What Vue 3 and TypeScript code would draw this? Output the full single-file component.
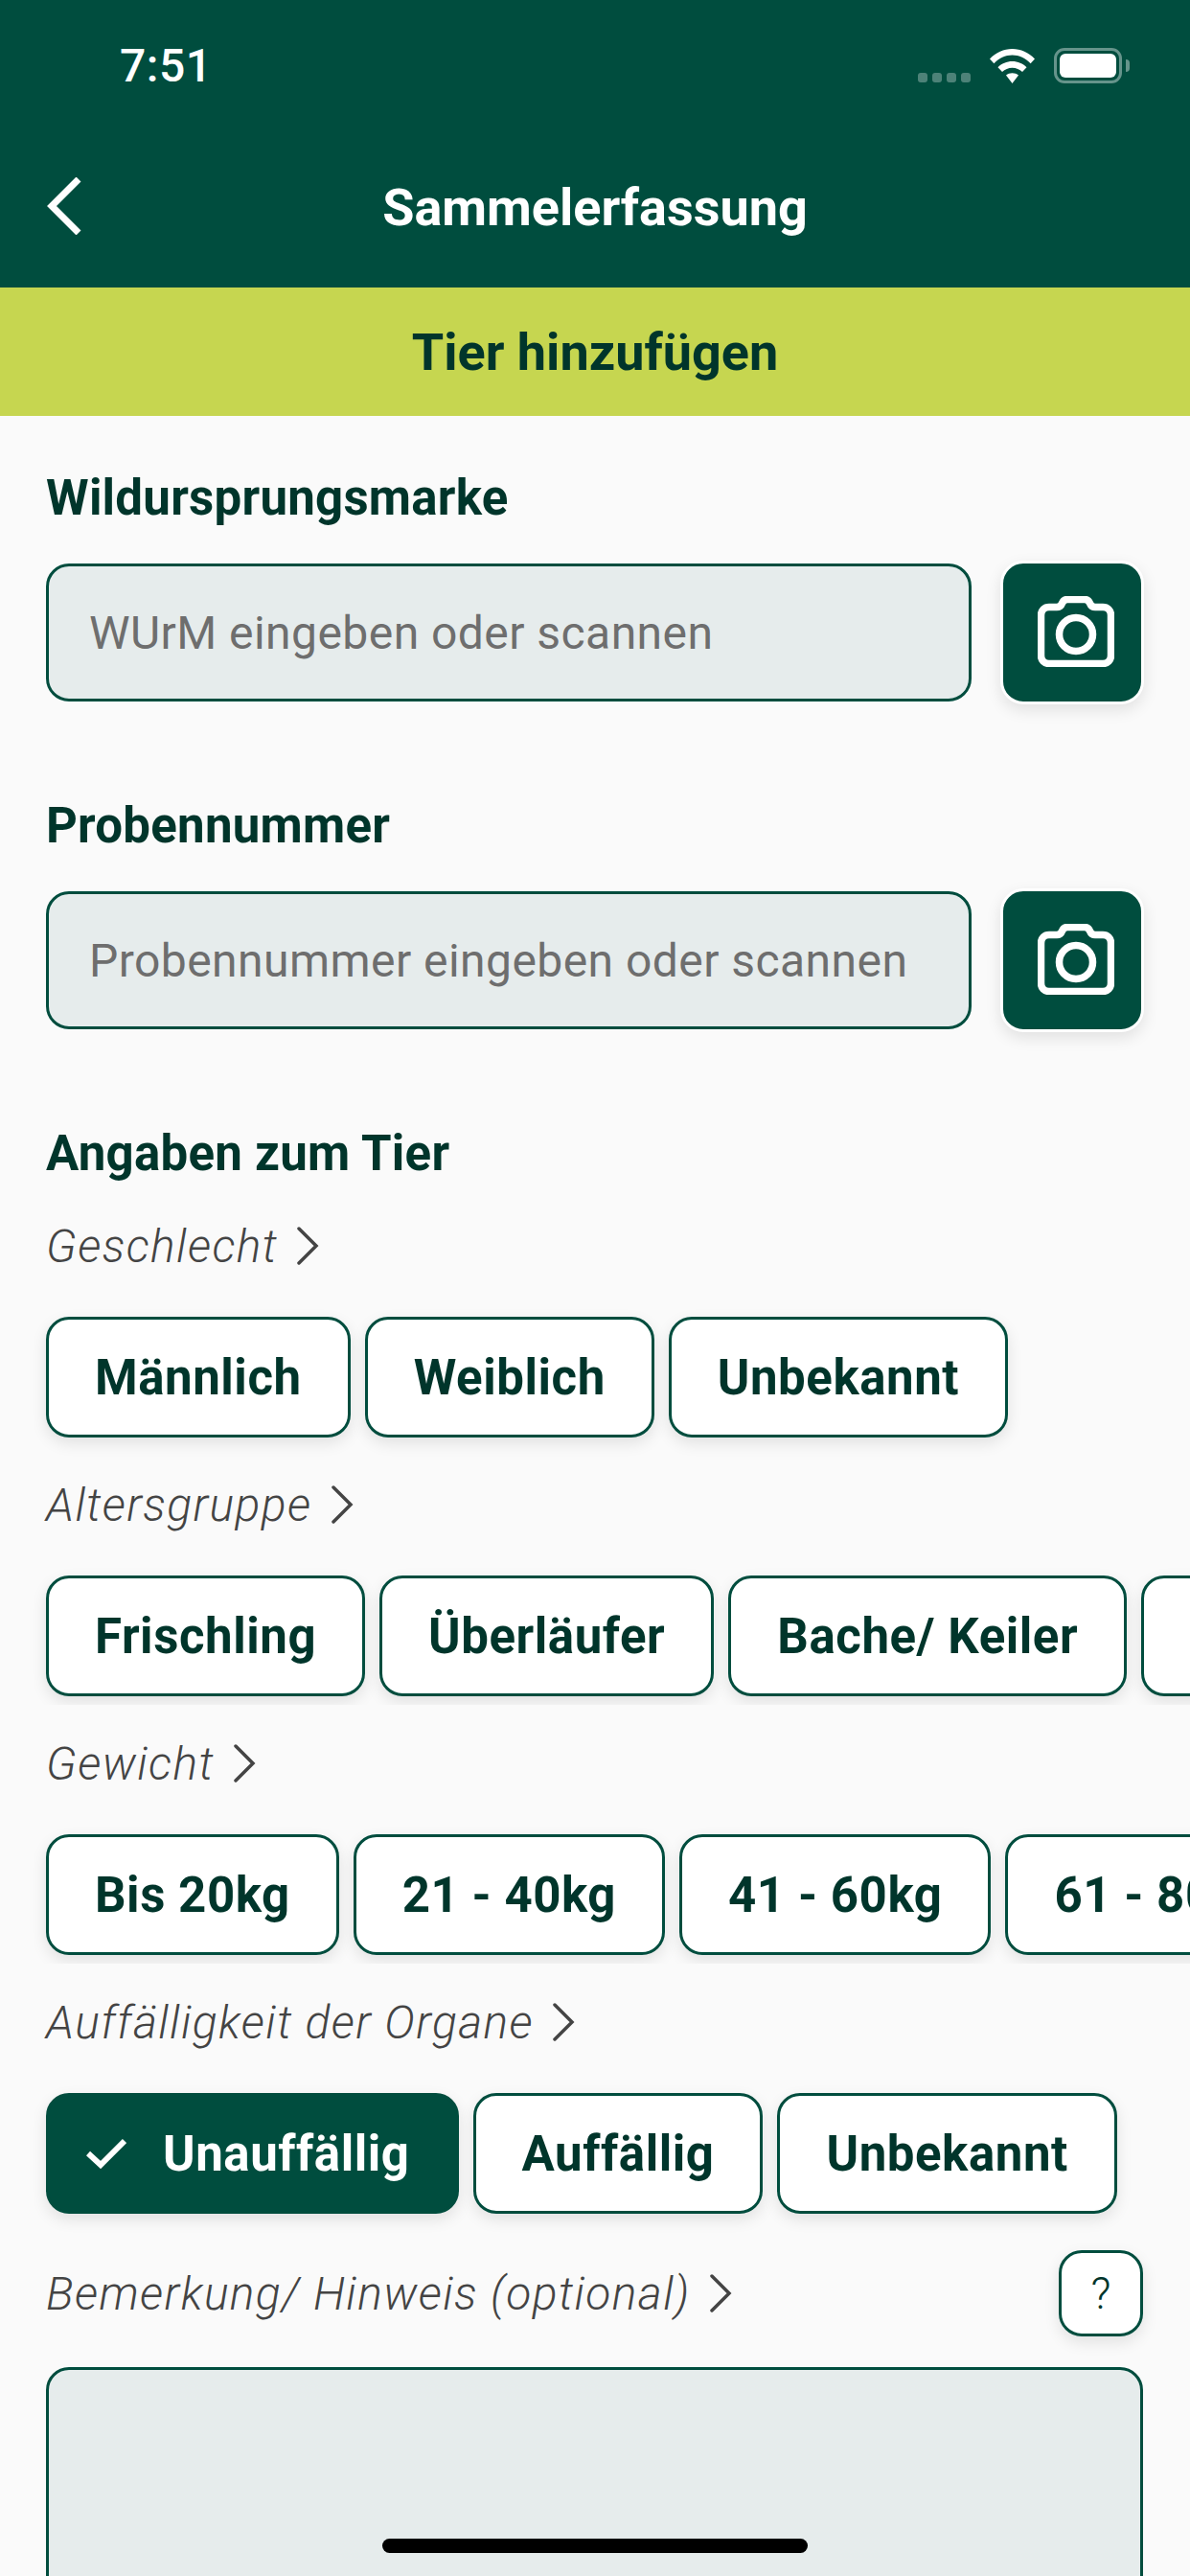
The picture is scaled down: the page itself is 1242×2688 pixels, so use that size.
<script setup lang="ts">
interface ChipRow {
  label: string
  options: string[]
  selected?: string
  scrolls?: boolean
}

const rows: ChipRow[] = [
  { label: 'Geschlecht', options: ['Männlich', 'Weiblich', 'Unbekannt'] },
  { label: 'Altersgruppe', options: ['Frischling', 'Überläufer', 'Bache/ Keiler', 'Unbekannt'], scrolls: true },
  { label: 'Gewicht', options: ['Bis 20kg', '21 - 40kg', '41 - 60kg', '61 - 80kg', 'Über 80kg'], scrolls: true },
  { label: 'Auffälligkeit der Organe', options: ['Unauffällig', 'Auffällig', 'Unbekannt'], selected: 'Unauffällig' },
]

const scanFields = [
  { label: 'Wildursprungsmarke', placeholder: 'WUrM eingeben oder scannen' },
  { label: 'Probennummer', placeholder: 'Probennummer eingeben oder scannen' },
]
</script>

<template>
  <div class="screen">
    <header class="top">
      <div class="status">
        <span class="time">7:51</span>
        <div class="status-icons">
          <div class="signal"><i></i><i></i><i></i><i></i></div>
          <svg class="wifi" width="47" height="36" viewBox="0 0 47 36">
            <path d="M0 10.5C6.5 3.8 14.6 0 23.5 0S40.500 3.800 47 10.500L42.600 15.200C37.300 9.900 30.800 6.600 23.500 6.600S9.700 9.900 4.400 15.200Z" fill="#fff" />
            <path d="M8.500 19.200C12.400 15.300 17.700 13 23.500 13S34.600 15.300 38.500 19.200L34 24C31.200 21.300 27.500 19.700 23.500 19.700S15.800 21.300 13 24Z" fill="#fff" />
            <path d="M17 27.500C18.800 26 21 25.200 23.500 25.200S28.200 26 30 27.500L23.500 36Z" fill="#fff" />
          </svg>
          <div class="battery"><div class="battery-fill"></div></div>
        </div>
      </div>
      <div class="nav">
        <svg class="back" width="36" height="60" viewBox="0 0 36 60">
          <path d="M33 2L5 30L33 58" fill="none" stroke="#fff" stroke-width="7" />
        </svg>
        <h1>Sammelerfassung</h1>
      </div>
    </header>
    <div class="banner">Tier hinzufügen</div>

    <main class="form">
      <section v-for="field in scanFields" :key="field.label" class="scan-field">
        <h2>{{ field.label }}</h2>
        <div class="scan-row">
          <div class="input">{{ field.placeholder }}</div>
          <button class="camera">
            <svg width="80" height="74" viewBox="0 0 80 74" fill="none" stroke="#fff" stroke-width="7.5">
              <path d="M12 11.500H20C23 11.500 24.500 10 25.500 7.500C26.500 5 28 3.500 31 3.500H49C52 3.500 53.500 5 54.500 7.500C55.500 10 57 11.500 60 11.500H68C73 11.500 76.500 15 76.500 20V62C76.500 67 73 70.500 68 70.500H12C7 70.500 3.500 67 3.500 62V20C3.500 15 7 11.500 12 11.500Z" stroke-linejoin="round" />
              <circle cx="40" cy="40" r="17.500" />
            </svg>
          </button>
        </div>
      </section>

      <h2 class="animal-title">Angaben zum Tier</h2>

      <section v-for="row in rows" :key="row.label" class="chip-section">
        <div class="row-label">
          <span>{{ row.label }}</span>
          <svg class="chevron" width="23" height="40" viewBox="0 0 23 40">
            <path d="M2 2L20 20L2 38" fill="none" stroke="#444" stroke-width="3.5" stroke-linecap="round" />
          </svg>
        </div>
        <div class="chips" :class="{ scrolls: row.scrolls }">
          <button v-for="opt in row.options" :key="opt" class="chip" :class="{ selected: opt === row.selected }">
            <svg v-if="opt === row.selected" class="check" width="42" height="32" viewBox="0 0 42 32">
              <path d="M2 16L15 28L40 3" fill="none" stroke="#fff" stroke-width="6" />
            </svg>
            {{ opt }}
          </button>
        </div>
      </section>

      <div class="note-head">
        <div class="row-label">
          <span>Bemerkung/ Hinweis (optional)</span>
          <svg class="chevron" width="23" height="40" viewBox="0 0 23 40">
            <path d="M2 2L20 20L2 38" fill="none" stroke="#444" stroke-width="3.5" stroke-linecap="round" />
          </svg>
        </div>
        <button class="help">?</button>
      </div>
      <div class="textarea"></div>
    </main>

    <div class="home-bar"></div>
  </div>
</template>

<style>
html,
body {
  margin: 0;
  background: #fafafa;
}
</style>

<style scoped>
.screen {
  position: relative;
  width: 1242px;
  height: 2688px;
  overflow: hidden;
  background: #fafafa;
  font-family: Roboto, "Liberation Sans", sans-serif;
  color: #00352b;
}

.top {
  height: 300px;
  background: #004d3e;
  color: #fff;
  box-sizing: border-box;
  padding-top: 40px;
}

.status {
  display: flex;
  justify-content: space-between;
  align-items: center;
  height: 56px;
  padding: 0 71px 0 125px;
}

.time {
  font-size: 48px;
  font-weight: 500;
  letter-spacing: 0.5px;
}

.status-icons {
  display: flex;
  align-items: flex-end;
  gap: 20px;
}

.signal {
  display: flex;
  gap: 5px;
  margin-bottom: 1px;
}

.signal i {
  width: 10px;
  height: 10px;
  border-radius: 3px;
  background: rgba(255, 255, 255, 0.3);
}

.wifi {
  display: block;
}

.battery {
  position: relative;
  box-sizing: border-box;
  width: 71px;
  height: 37px;
  padding: 3px;
  border: 3px solid rgba(255, 255, 255, 0.4);
  border-radius: 11px;
}

.battery::after {
  content: '';
  position: absolute;
  right: -11px;
  top: 9px;
  width: 4px;
  height: 13px;
  border-radius: 0 4px 4px 0;
  background: rgba(255, 255, 255, 0.4);
}

.battery-fill {
  height: 100%;
  border-radius: 6px;
  background: #fff;
}

.nav {
  position: relative;
  display: flex;
  justify-content: center;
  align-items: center;
  height: 80px;
  margin-top: 80px;
}

.back {
  position: absolute;
  left: 49px;
  top: 9px;
}

.nav h1 {
  margin: 0;
  font-size: 54px;
  font-weight: 700;
}

.banner {
  height: 134px;
  display: flex;
  align-items: center;
  justify-content: center;
  background: #c6d650;
  font-size: 54px;
  font-weight: 700;
}

.form {
  padding: 54px 0 0 48px;
}

h2 {
  margin: 0;
  font-size: 51px;
  line-height: 64px;
  font-weight: 700;
  letter-spacing: 0.25px;
}

.scan-field {
  height: 342px;
}

.scan-row {
  display: flex;
  align-items: center;
  gap: 30px;
  margin-top: 33px;
}

.input {
  box-sizing: border-box;
  width: 966px;
  height: 144px;
  display: flex;
  align-items: center;
  padding-left: 42px;
  border: 3px solid #004d3e;
  border-radius: 24px;
  background: #e6ecec;
  color: #6e6e6e;
  font-size: 48px;
  letter-spacing: 0.45px;
}

.camera {
  box-sizing: border-box;
  width: 150px;
  height: 150px;
  display: flex;
  align-items: center;
  justify-content: center;
  padding: 0 0 3px 7px;
  border: 3px solid #fff;
  border-radius: 24px;
  background: #004d3e;
  box-shadow: 0 6px 16px rgba(0, 0, 0, 0.1);
}

.animal-title {
  margin-bottom: 34px;
}

.row-label {
  display: flex;
  align-items: center;
  gap: 20px;
  height: 60px;
  color: #444;
  font-size: 48px;
  font-style: italic;
  font-weight: 300;
  letter-spacing: 1.4px;
}

.chips {
  display: flex;
  gap: 15px;
  width: 1194px;
  padding: 44px 0 9px 48px;
  margin: 0 0 31px -48px;
}

/* the horizontal scrollers cut the chip shadow off at their lower edge */
.chips.scrolls {
  overflow: hidden;
}

.chip {
  box-sizing: border-box;
  flex: none;
  height: 126px;
  display: flex;
  align-items: center;
  padding: 0 48px;
  border: 3px solid #004d3e;
  border-radius: 24px;
  background: #fff;
  color: #00352b;
  font-family: inherit;
  font-size: 51px;
  font-weight: 700;
  letter-spacing: 0.55px;
  box-shadow: 0 6px 16px rgba(0, 0, 0, 0.1);
}

.chip.selected {
  background: #004d3e;
  color: #fff;
  padding-left: 39px;
}

.check {
  margin-right: 38px;
}

.note-head {
  display: flex;
  align-items: center;
  justify-content: space-between;
  height: 90px;
  margin-top: -2px;
  padding-right: 49px;
}

.help {
  box-sizing: border-box;
  width: 88px;
  height: 90px;
  padding: 0;
  border: 3px solid #004d3e;
  border-radius: 24px;
  background: #fff;
  color: #00352b;
  font-family: inherit;
  font-size: 46px;
  font-weight: 300;
  box-shadow: 0 6px 16px rgba(0, 0, 0, 0.1);
}

.textarea {
  box-sizing: border-box;
  width: 1145px;
  height: 320px;
  margin-top: 32px;
  border: 3px solid #004d3e;
  border-radius: 24px;
  background: #e6ecec;
}

.home-bar {
  position: absolute;
  left: 399px;
  top: 2649px;
  width: 444px;
  height: 15px;
  border-radius: 8px;
  background: #000;
}
</style>
